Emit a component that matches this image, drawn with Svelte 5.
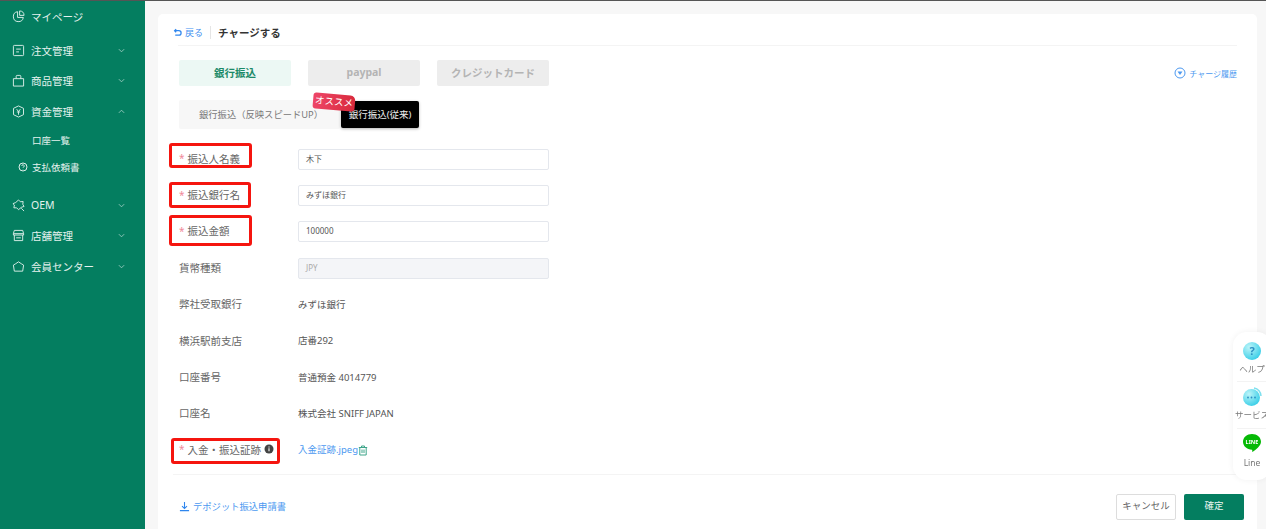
<script lang="ts">
	const banks = [
		{ label: '貨幣種類', value: 'JPY', input: true, disabled: true },
		{ label: '弊社受取銀行', value: 'みずほ銀行' },
		{ label: '横浜駅前支店', value: '店番292' },
		{ label: '口座番号', value: '普通預金 4014779' },
		{ label: '口座名', value: '株式会社 SNIFF JAPAN' }
	];
	const required = [
		{ label: '振込人名義', value: '木下', mark: 'm1' },
		{ label: '振込銀行名', value: 'みずほ銀行', mark: 'm2' },
		{ label: '振込金額', value: '100000', mark: 'm3' }
	];
</script>

<div class="layout">
	<aside class="sidebar">
		<div class="item first">
			<svg viewBox="0 0 14 14"><path d="M6 1.800a5.400 5.400 0 1 0 6.200 6.200H6z" /><path d="M8.200 1v4.800H13A5 5 0 0 0 8.200 1z" /></svg>
			<span>マイページ</span>
		</div>
		<div class="item">
			<svg viewBox="0 0 14 14"><rect x="1.500" y="1.500" width="11" height="11" rx="1" /><path d="M4.500 5.500h5M4.500 8.500h3" /></svg>
			<span>注文管理</span>
			<svg class="chev" viewBox="0 0 8 5"><path d="M1 1l3 3 3-3" /></svg>
		</div>
		<div class="item">
			<svg viewBox="0 0 14 14"><path d="M1.500 5h11v8h-11zM4.500 5V2.500a1 1 0 0 1 1-1h3a1 1 0 0 1 1 1V5" /></svg>
			<span>商品管理</span>
			<svg class="chev" viewBox="0 0 8 5"><path d="M1 1l3 3 3-3" /></svg>
		</div>
		<div class="item">
			<svg viewBox="0 0 14 14"><path d="M7 1l5.400 2.600v6.800L7 13l-5.400-2.600V3.600z" /><path d="M5 4.500L7 7l2-2.500M7 7v3.500M5.200 7.500h3.600" /></svg>
			<span>資金管理</span>
			<svg class="chev" viewBox="0 0 8 5"><path d="M1 4l3-3 3 3" /></svg>
		</div>
		<div class="sub plain">口座一覧</div>
		<div class="sub">
			<svg viewBox="0 0 10 10"><circle cx="5" cy="5" r="4" /><path d="M3.800 4a1.200 1.200 0 1 1 1.800 1c-.4.300-.6.400-.6.900M5 7.100v.3" /></svg>
			<span>支払依頼書</span>
		</div>
		<div class="item oem">
			<svg viewBox="0 0 14 14"><path d="M7 1l2 2 3-.3-.4 3L13 8l-3 1-3 2.500-2-2H2l.6-3L1 5l3-1.200z" /><path d="M10 10l3 3" /></svg>
			<span>OEM</span>
			<svg class="chev" viewBox="0 0 8 5"><path d="M1 1l3 3 3-3" /></svg>
		</div>
		<div class="item">
			<svg viewBox="0 0 14 14"><path d="M2.500 1.500h9l1 3.500v1.500h-11V5zM1.500 5h11M2.500 6.500v6h9v-6M4.500 9.500h5" /></svg>
			<span>店舗管理</span>
			<svg class="chev" viewBox="0 0 8 5"><path d="M1 1l3 3 3-3" /></svg>
		</div>
		<div class="item">
			<svg viewBox="0 0 14 14"><path d="M1.500 5.500L4 4l3-2 3 2 2.500 1.500-1 6.500h-9z" /></svg>
			<span>会員センター</span>
			<svg class="chev" viewBox="0 0 8 5"><path d="M1 1l3 3 3-3" /></svg>
		</div>
	</aside>

	<main class="main">
		<section class="card">
			<header class="head">
				<a class="back">
					<svg viewBox="0 0 10 10"><path d="M2 3h4.500a2.300 2.300 0 0 1 0 5H2.500M3.500 1.300L1.800 3l1.700 1.700" /></svg>
					戻る
				</a>
				<span class="title">チャージする</span>
			</header>

			<div class="tabs">
				<button class="tab active">銀行振込</button>
				<button class="tab">paypal</button>
				<button class="tab">クレジットカード</button>
				<a class="history">
					<svg viewBox="0 0 12 12"><circle cx="6" cy="6" r="5" /><path class="fill" d="M3.500 4.500h5L6 8z" /></svg>
					チャージ履歴
				</a>
			</div>

			<div class="subtabs">
				<span class="sub-grey">銀行振込（反映スピードUP）</span>
				<span class="sub-black">銀行振込(従来)</span>
				<span class="badge">オススメ</span>
			</div>

			<div class="form">
				{#each required as r}
					<div class="row">
						<label><i>*</i> {r.label}<span class="mark {r.mark}"></span></label>
						<div class="field">{r.value}</div>
					</div>
				{/each}

				{#each banks as b}
					<div class="row">
						<label>{b.label}</label>
						{#if b.input}
							<div class="field off">{b.value}</div>
						{:else}
							<span class="value">{b.value}</span>
						{/if}
					</div>
				{/each}

				<div class="row">
					<label>
						<i>*</i> 入金・振込証跡
						<svg class="info" viewBox="0 0 10 10"><circle cx="5" cy="5" r="4.500" /><path d="M5 4.300v3M5 2.400v1" /></svg>
						<span class="mark m4"></span>
					</label>
					<a class="file">入金証跡.jpeg</a>
					<svg class="trash" viewBox="0 0 10 11"><path d="M.8 2.500h8.400M3.500 2.500V1h3v1.500M1.800 2.500v7.500h6.400V2.500M4 4.500v3.500M6 4.500v3.500" /></svg>
				</div>
			</div>

			<footer class="foot">
				<a class="download">
					<svg viewBox="0 0 12 12"><path d="M6 1v7M3.300 5.500L6 8.200l2.700-2.700M1 10.500h10" /></svg>
					デポジット振込申請書
				</a>
				<div class="actions">
					<button class="cancel">キャンセル</button>
					<button class="ok">確定</button>
				</div>
			</footer>
		</section>
	</main>

	<div class="float">
		<div class="float-item help">
			<svg viewBox="0 0 20 20">
				<defs>
					<radialGradient id="cy" cx="35%" cy="30%" r="80%"><stop offset="0" stop-color="#bdf5f9" /><stop offset="1" stop-color="#2fcbe6" /></radialGradient>
				</defs>
				<circle cx="10" cy="10" r="9" fill="url(#cy)" />
				<text x="10" y="14" text-anchor="middle" font-size="11" font-weight="700" fill="#2b8fc4">?</text>
			</svg>
			<span>ヘルプ</span>
		</div>
		<div class="float-item service">
			<svg viewBox="0 0 20 20">
				<path d="M12 1a8 8 0 0 1 7 8" fill="none" stroke="#7fe0ee" stroke-width="1.500" />
				<circle cx="9.500" cy="10.500" r="8.500" fill="url(#cy)" />
				<circle cx="6" cy="10.500" r=".9" fill="#2b8fc4" /><circle cx="9.500" cy="10.500" r=".9" fill="#2b8fc4" /><circle cx="13" cy="10.500" r=".9" fill="#2b8fc4" />
			</svg>
			<span>サービス</span>
		</div>
		<div class="float-item line">
			<svg viewBox="0 0 20 20">
				<path d="M10 1c5 0 9 3.200 9 7.800 0 4-5 7.800-8.500 10.200-.6-.3 0-2.200-.5-2.300C5 16.700 1 13.200 1 8.800 1 4.200 5 1 10 1z" fill="#06b906" />
				<text x="10" y="11" text-anchor="middle" font-size="5.500" font-weight="700" fill="#fff">LINE</text>
			</svg>
			<span>Line</span>
		</div>
	</div>
</div>

<style>
	:global(body) {
		margin: 0;
		overflow: hidden;
	}

	.layout {
		display: flex;
		height: 529px;
		overflow: hidden;
		border-top: 1px solid #555;
		box-sizing: border-box;
		font-family: 'Noto Sans', 'Noto Sans CJK JP', sans-serif;
		background: #f7f7f7;
		color: #555;
	}

	.sidebar {
		flex: 0 0 145px;
		background: #047e60;
		color: #e4f2ee;
		font-size: 10.500px;
	}

	.sidebar svg {
		fill: none;
		stroke: #dff0eb;
		stroke-width: 1;
	}

	.item {
		display: flex;
		align-items: center;
		height: 30.600px;
		padding-left: 12px;
		gap: 6px;
	}

	.item > svg:first-child {
		width: 13px;
		height: 13px;
	}

	.item.first {
		height: 30px;
		margin-bottom: 4px;
	}

	.item.oem {
		margin-top: 10px;
	}

	.chev {
		width: 7px;
		height: 5px;
		margin-left: auto;
		margin-right: 20px;
		opacity: 0.7;
	}

	.item span {
		flex: none;
	}

	.sub {
		display: flex;
		align-items: center;
		gap: 4px;
		height: 26px;
		padding-left: 18px;
		font-size: 9.500px;
	}

	.sub.plain {
		padding-left: 32px;
		height: 26px;
		margin-top: 1px;
		padding-bottom: 2px;
		box-sizing: border-box;
	}

	.sub svg {
		width: 10px;
		height: 10px;
	}

	.main {
		flex: 1;
		padding: 13px 9px 0 13px;
		min-width: 0;
	}

	.card {
		background: #fff;
		border-radius: 5px 5px 0 0;
		height: 100%;
		padding: 0 20px;
		box-sizing: border-box;
	}

	.head {
		display: flex;
		align-items: center;
		height: 32px;
		padding-top: 6px;
		box-sizing: border-box;
		border-bottom: 1px solid #f4f4f4;
	}

	.back {
		display: flex;
		align-items: center;
		gap: 3px;
		margin-left: -5px;
		color: #3f8ff0;
		font-size: 9px;
		padding-right: 7px;
		border-right: 1px solid #e5e5e5;
		line-height: 13px;
	}

	.back svg {
		width: 9px;
		height: 9px;
		fill: none;
		stroke: #2f86ee;
		stroke-width: 1.400;
	}

	.title {
		margin-left: 7px;
		font-size: 10.500px;
		font-weight: 700;
		color: #333;
	}

	.tabs {
		display: flex;
		align-items: center;
		gap: 17px;
		margin-top: 14px;
		padding-left: 1px;
	}

	.tab {
		width: 112px;
		height: 26px;
		border: 0;
		border-radius: 2px;
		background: #ededed;
		color: #b4b4b4;
		font-family: inherit;
		font-size: 10.500px;
		font-weight: 700;
		padding: 0 0 2px;
	}

	.tab.active {
		background: #ecf8f4;
		color: #1c8a68;
	}

	.history {
		display: flex;
		align-items: center;
		gap: 3px;
		margin-left: auto;
		color: #4b98f0;
		font-size: 8px;
	}

	.history svg {
		width: 12px;
		height: 12px;
		fill: none;
		stroke: #4b98f0;
	}

	.history .fill {
		fill: #4b98f0;
		stroke: none;
	}

	.subtabs {
		position: relative;
		display: flex;
		align-items: center;
		margin-top: 14px;
		margin-left: 1px;
		height: 29px;
	}

	.sub-grey {
		display: flex;
		align-items: center;
		width: 161px;
		height: 29px;
		padding: 0 0 2px 20px;
		box-sizing: border-box;
		background: #f7f7f7;
		border-radius: 2px;
		font-size: 9.300px;
		color: #777;
	}

	.sub-black {
		display: flex;
		align-items: center;
		justify-content: center;
		width: 78px;
		height: 27px;
		padding-bottom: 2px;
		box-sizing: border-box;
		margin-left: 1px;
		background: #000;
		border-radius: 2px;
		box-shadow: 0 1px 3px rgba(0, 0, 0, 0.3);
		color: #eee;
		font-size: 9.500px;
	}

	.badge {
		position: absolute;
		left: 134px;
		top: -6px;
		width: 42px;
		height: 16px;
		line-height: 15px;
		text-align: center;
		background: linear-gradient(90deg, #ee4668, #d92a3c);
		border-radius: 3px 5px 3px 3px;
		transform: rotate(5deg);
		color: #fff;
		font-size: 9.500px;
	}

	.form {
		margin-top: 12px;
		margin-left: -5px;
		padding-left: 6px;
		padding-bottom: 5px;
		border-bottom: 1px solid #f4f4f4;
	}

	.row {
		display: flex;
		align-items: center;
		height: 36.400px;
	}

	label {
		position: relative;
		flex: 0 0 119px;
		display: flex;
		align-items: center;
		align-self: stretch;
		box-sizing: border-box;
		padding-bottom: 2px;
		font-size: 10.500px;
		color: #666;
		gap: 3px;
	}

	label i {
		color: #f08a98;
		font-style: normal;
		font-size: 10px;
	}

	.info {
		width: 10px;
		height: 10px;
		flex: none;
		fill: #444;
		stroke: none;
	}

	.info path {
		stroke: #fff;
		stroke-width: 1.100;
	}

	.mark {
		position: absolute;
		box-sizing: border-box;
		border: 3px solid #f5150f;
		border-radius: 3px;
		left: -10px;
	}

	.m1 { top: 2px; width: 83px; height: 25px; }
	.m2 { top: 4.500px; width: 82px; height: 26px; }
	.m3 { top: 1.500px; width: 83px; height: 31px; }
	.m4 { top: 6px; left: -8px; width: 109px; height: 26px; }

	.field {
		width: 251px;
		height: 21px;
		line-height: 17px;
		box-sizing: border-box;
		border: 1px solid #e4e7ed;
		border-radius: 2px;
		padding-left: 7px;
		font-size: 8px;
		color: #555;
		background: #fff;
	}

	.field.off {
		background: #f4f5f8;
		color: #aaa;
	}

	.value {
		font-size: 9.500px;
		color: #555;
		padding-bottom: 2px;
	}

	.file {
		font-size: 9.500px;
		color: #4b98f0;
		padding-bottom: 2px;
	}

	.trash {
		width: 10px;
		height: 11px;
		fill: none;
		stroke: #3fa58a;
		stroke-width: 1;
	}

	.foot {
		display: flex;
		align-items: center;
		margin-top: 19px;
		margin-right: -7px;
		padding-left: 1px;
	}

	.download {
		display: flex;
		align-items: center;
		gap: 3px;
		color: #4b98f0;
		font-size: 9.300px;
		line-height: 14px;
	}

	.download svg {
		width: 11px;
		height: 11px;
		fill: none;
		stroke: #2f86ee;
		stroke-width: 1.200;
	}

	.actions {
		display: flex;
		gap: 8px;
		margin-left: auto;
	}

	.actions button {
		width: 60px;
		height: 26px;
		border-radius: 2px;
		font-family: inherit;
		font-size: 9.500px;
		padding: 0 0 3px;
	}

	.cancel {
		background: #fff;
		border: 1px solid #ddd;
		color: #666;
	}

	.ok {
		background: #047e60;
		border: 0;
		color: #e8f5f1;
	}

	.float {
		position: fixed;
		left: 1233px;
		top: 332px;
		width: 38px;
		height: 148px;
		background: #fff;
		border-radius: 14px;
		box-shadow: 0 0 6px rgba(0, 0, 0, 0.06);
		display: flex;
		flex-direction: column;
		padding: 0 4px;
		box-sizing: border-box;
	}

	.float-item {
		display: flex;
		flex-direction: column;
		align-items: center;
		box-sizing: border-box;
		border-bottom: 1px solid #f3f3f3;
		font-size: 8.500px;
		line-height: 12px;
		color: #777;
		white-space: nowrap;
	}

	.help { height: 50px; padding-top: 9px; gap: 2px; }
	.service { height: 47px; padding-top: 5px; gap: 2px; }
	.line { height: 51px; padding-top: 4px; gap: 4px; border-bottom: 0; }

	.float-item svg {
		width: 20px;
		height: 20px;
		flex: none;
	}
</style>
